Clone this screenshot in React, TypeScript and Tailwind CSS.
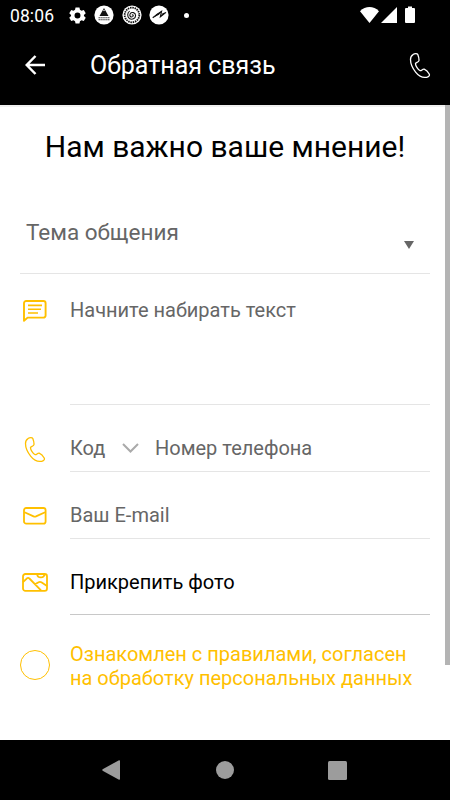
import type { ReactNode } from 'react';

function PhoneIcon({ className }: { className?: string }) {
  return (
    <svg width="22" height="27" viewBox="-1 -1 22 27" fill="none" stroke="currentColor" strokeWidth="1.3" strokeLinejoin="round" className={className}>
      <path d="M3 1.6C4.6.4 7.2.2 7.8 1.6C8.5 3.4 9.1 5.8 9 7.5C8.9 9.3 5.8 9.3 5.5 10.5C5.3 12.6 8.2 16.9 10.2 17.7C11.6 18 12.5 15.8 14.2 16.2C15.8 16.8 18.3 19.3 19.2 21C20 22.6 18.5 24 16.6 24.3C12.8 25 9 23.4 5.8 19.4C2.4 15.2.5 10.8.5 6.6C.5 4.4 1.4 2.6 3 1.6Z" />
    </svg>
  );
}

function MessageIcon() {
  return (
    <svg width="24" height="23" viewBox="0 0 24 23" fill="none" stroke="currentColor" strokeLinejoin="round">
      <path d="M1 20.800V3.200A2.200 2.200 0 0 1 3.200 1H20.400A2.200 2.200 0 0 1 22.600 3.200V15.400A2.200 2.200 0 0 1 20.400 17.600H4.600Z" strokeWidth="1.900" />
      <path d="M5 5.400H19M5 9.200H18M5 13H15" strokeWidth="1.600" />
    </svg>
  );
}

function MailIcon() {
  return (
    <svg width="24" height="18" viewBox="0 0 24 18" fill="none" stroke="currentColor" strokeWidth="1.8" strokeLinejoin="round">
      <rect x="1" y="1" width="21.6" height="15.6" rx="2.2" />
      <path d="M1.5 5.2L10.6 9.4Q11.8 9.9 13 9.4L22.1 5.2" />
    </svg>
  );
}

function PictureIcon() {
  return (
    <svg width="26" height="19" viewBox="0 0 26 19" fill="none" stroke="currentColor" strokeWidth="1.8" strokeLinejoin="round">
      <rect x="1" y="1" width="24" height="16.8" rx="2.4" />
      <path d="M1 9L5 5.3Q6.2 4.5 7.4 5.5L19 17.4M13 11.2L16.6 9.2Q18 8.4 19.4 9.3L25 13M15.2 1C15.4 5.6 22.2 5.6 22.4 1" />
    </svg>
  );
}

function StatusBar() {
  return (
    <div className="flex h-[30px] items-center pl-[10px] pr-[35px]">
      <span className="w-[58.5px] text-[17.5px] leading-[30px] tracking-[0.1px] pt-px">08:06</span>
      <svg width="17" height="17" viewBox="2 2 20 20" fill="currentColor">
        <path fillRule="evenodd" d="M9.700 2.500H14.300L14.900 5.300L16.700 6.300L19.400 5.400L21.700 9.400L19.600 11.300V12.700L21.700 14.600L19.400 18.600L16.700 17.700L14.900 18.700L14.300 21.500H9.700L9.100 18.700L7.300 17.700L4.600 18.600L2.300 14.600L4.400 12.700V11.300L2.300 9.400L4.600 5.400L7.300 6.300L9.100 5.300ZM12 8.500A3.500 3.500 0 1 0 12 15.500A3.500 3.500 0 0 0 12 8.500Z" />
      </svg>
      <svg width="20" height="20" viewBox="0 0 20 20" className="ml-[8px]">
        <circle cx="10" cy="10" r="9.6" fill="#fff" />
        <path d="M10 3L14.500 11H5.500Z" fill="#111" />
        <path d="M9.100 5.600L10 4.400L10.900 5.600L10 6.200Z" fill="#fff" />
        <path d="M4.500 12.700H15.500M4.500 14.700H15.500" stroke="#444" strokeWidth="1.100" strokeDasharray="1.500 .4" />
      </svg>
      <svg width="20" height="20" viewBox="0 0 20 20" className="ml-[8px]" fill="none">
        <circle cx="10" cy="10" r="9.6" fill="#fff" />
        <circle cx="10" cy="10" r="7.300" stroke="#111" strokeWidth="1.800" strokeDasharray="1.500 .8" />
        <path d="M10 10.200C10.800 9 12 10.700 10.600 11.600C8.800 12.700 7 10.600 8.200 8.700C9.700 6.500 13.500 7.500 13.600 10.500C13.600 13.600 10 15.200 7.400 13.500C5 11.700 5.200 7.700 7.600 6.100" stroke="#111" strokeWidth="1.100" />
      </svg>
      <svg width="20" height="20" viewBox="0 0 20 20" className="ml-[7px]">
        <circle cx="10" cy="10" r="9.6" fill="#fff" />
        <path d="M3.700 12.800L12.500 6.300L11.400 11.800L17 7.400" fill="none" stroke="#111" strokeWidth="1.200" />
        <path d="M4 12.800L7.500 8.900L12.600 6.200L10 9.700ZM11.200 12L13.500 8.300L17 7.300Z" fill="#111" />
      </svg>
      <span className="ml-[15px] size-[5px] rounded-full bg-white" />
      <svg width="55" height="18" viewBox="0 0 55 18" className="ml-auto" fill="currentColor">
        <path d="M0 5.200C5.500-.3 13.500-.3 19 5.200L9.500 17Z" />
        <path d="M37 1V17H21Z" />
        <path d="M48 .5H52V2H54Q55 2 55 3V16Q55 17 54 17H46Q45 17 45 16V3Q45 2 46 2H48Z" />
      </svg>
    </div>
  );
}

function Field({ icon, className, children }: { icon: ReactNode; className: string; children: ReactNode }) {
  return (
    <div className="flex">
      <div className="flex w-[50px] shrink-0 text-[#ffc000]">{icon}</div>
      <div className={`flex-1 border-b text-[20px] leading-6 ${className}`}>{children}</div>
    </div>
  );
}

export default function App() {
  return (
    <div className="flex h-[800px] w-[450px] flex-col overflow-hidden bg-white font-[Roboto,sans-serif] text-black">
      <header className="h-[105px] shrink-0 bg-black text-white">
        <StatusBar />
        <div className="flex h-[71px] items-center pl-[25px] pr-[19px]">
          <svg width="21" height="20" viewBox="0 0 21 20" className="-mt-px" fill="none" stroke="currentColor" strokeWidth="2.500">
            <path d="M20 10H2M10.500 1L1.700 10L10.500 19" />
          </svg>
          <h1 className="ml-[44px] pt-px text-[25px] leading-8">Обратная связь</h1>
          <PhoneIcon className="ml-auto" />
        </div>
      </header>

      <main className="flex min-h-0 flex-1 border-t-2 border-[#f0f0f0]">
        <form className="w-[445px] pl-5 pr-[15px]">
          <h2 className="pt-[20px] text-center text-[30px] leading-10">Нам важно ваше мнение!</h2>
          <div className="mt-[41px] flex h-[66px] justify-between border-b border-[#e5e5e5] pl-[6px] pr-4 pt-[8px] text-[22.500px] leading-8 text-[#666]">
            <span>Тема общения</span>
            <svg width="10" height="8" viewBox="0 0 10 8" className="mt-[25px]" fill="#666">
              <path d="M0 0H10L5 8Z" />
            </svg>
          </div>

          <Field icon={<div className="ml-[3px] mt-[26px]"><MessageIcon /></div>} className="h-[131px] border-[#e5e5e5] pt-[24px] text-[#666]">
            Начните набирать текст
          </Field>
          <Field icon={<div className="ml-[4px] mt-[31px]"><PhoneIcon /></div>} className="flex h-[67px] border-[#e5e5e5] pt-[31px] text-[#666]">
            <span className="w-[52px]">Код</span>
            <svg width="17" height="11" viewBox="0 0 17 11" className="mt-[7px]" fill="none" stroke="#aaa" strokeWidth="2">
              <path d="M1 1L8.500 8.500L16 1" />
            </svg>
            <span className="ml-[16px]">Номер телефона</span>
          </Field>
          <Field icon={<div className="ml-[3px] mt-[35px]"><MailIcon /></div>} className="h-[67px] border-[#e5e5e5] pt-[31px] text-[#666]">
            Ваш E-mail
          </Field>
          <Field icon={<div className="ml-[2px] mt-[34px]"><PictureIcon /></div>} className="h-[76px] border-[#c8c8c8] pt-[31px]">
            Прикрепить фото
          </Field>

          <label className="mt-[28px] flex items-start text-[#ffc000]">
            <span className="mt-[7px] size-[30px] shrink-0 rounded-full border border-current" />
            <span className="ml-5 whitespace-nowrap text-[20px] leading-[23.500px]">
              Ознакомлен с правилами, согласен
              <br />
              на обработку персональных данных
            </span>
          </label>
        </form>
        <div className="-mt-[2px] h-[560px] w-[5px] bg-[#b4b4b4]" />
      </main>

      <nav className="flex h-[60px] shrink-0 items-center bg-black text-[#9c9c9c]">
        <svg width="18" height="20" viewBox="0 0 18 20" className="ml-[102px]" fill="currentColor">
          <path d="M17 .2Q18 0 18 1V19Q18 20 17 19.800L.6 10.700Q0 10 .6 9.300Z" />
        </svg>
        <span className="ml-[96px] size-[18px] rounded-full bg-current" />
        <span className="ml-[94px] size-[19px] rounded-[1.500px] bg-current" />
      </nav>
    </div>
  );
}
